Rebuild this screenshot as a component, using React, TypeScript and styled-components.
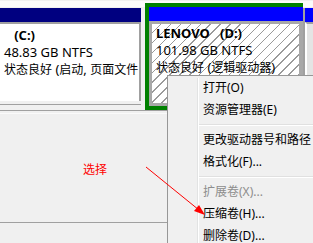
import React from 'react';
import styled, {createGlobalStyle} from "styled-components";

const GlobalStyle = createGlobalStyle`
html, body {
margin: 0;
padding: 0;
background: #f0f0f0;
}
`

const Screen = styled.div`
position: relative;
width: 313px;
height: 243px;
overflow: hidden;
background: #f0f0f0;
font-family: "Noto Sans", "Noto Sans CJK SC", sans-serif;
font-size: 12px;
color: #000;
`
const DiskRow = styled.div`
display: flex;
align-items: flex-start;
height: 110px;
font-size: 13px;
background: linear-gradient(#f0f0f0 0 1px, #fbfbfb 1px 7px, #f0f0f0 7px);
`
const Partition = styled.div<{width: number}>`
display: flex;
flex-direction: column;
flex: none;
width: ${({width}) => width}px;
margin-top: 8px;
`
const Header = styled.div<{primary?: boolean}>`
height: 14px;
background: ${({primary}) => primary ? "#000080" : "#0000ff"};
`
const Body = styled.div`
height: 79px;
background: #fff;
border-top: 2px solid #a0a0a0;
border-right: 2px solid #a0a0a0;
padding: 3px 0 0 4px;
box-sizing: border-box;
line-height: 17px;
white-space: pre;
overflow: hidden;
`
const PartitionFoot = styled.div`
margin-top: 3px;
border-top: 1px solid #a0a0a0;
`
const Selected = styled.div`
display: flex;
flex-direction: column;
flex: none;
width: 158px;
height: 107px;
margin: 3px 0 0 4px;
border: 4px solid #008000;
border-right: none;
box-sizing: border-box;
`
const Frame = styled.div`
flex: 1;
border: 3px solid #a8a8a8;
border-right-width: 4px;
background: #fff repeating-linear-gradient(135deg, #fff 0 6px, #9a9a9a 6px 7px);
padding: 1px 0 0 4px;
line-height: 17px;
white-space: pre;
overflow: hidden;
`
const Rest = styled.div`
flex: 1;
display: flex;
flex-direction: column;
margin-top: 8px;
border-left: 2px solid #a0a0a0;
height: 100px;
`
const RestBody = styled.div`
flex: 1;
border-left: 2px solid #fff;
border-top: 2px solid #a0a0a0;
background: #e4e4e4;
`
const Line = styled.div`
height: 17px;
`
const Bold = styled.b`
font-weight: 700;
`
const Cjk = styled.span`
font-size: 12px;
`
const Rule = styled.div<{light?: boolean}>`
height: 1px;
background: ${({light}) => light ? "#fafafa" : "#a0a0a0"};
`
const Blank = styled.div<{height: number}>`
height: ${({height}) => height}px;
`
const Note = styled.div`
position: absolute;
left: 83px;
top: 162px;
color: #ff0000;
font-size: 12px;
line-height: 16px;
`
const Arrow = styled.svg`
position: absolute;
left: 0;
top: 0;
z-index: 2;
pointer-events: none;
`
const Menu = styled.div`
position: absolute;
left: 167px;
top: 75px;
width: 170px;
padding: 1px 0 2px;
background: #f0f0f0;
border: 1px solid #979797;
box-shadow: 2px 2px 2px rgba(0, 0, 0, 0.2);
z-index: 1;
&::before {
content: "";
position: absolute;
left: 29px;
top: 2px;
bottom: 0;
width: 1px;
background: #e2e3e3;
border-right: 1px solid #fff;
}
`
const Item = styled.div<{disabled?: boolean}>`
position: relative;
height: 22px;
line-height: 22px;
padding-left: 35px;
white-space: nowrap;
color: ${({disabled}) => disabled ? "#8d8d8d" : "#000"};
`
const Separator = styled.div`
position: relative;
height: 8px;
margin-left: 31px;
&::after {
content: "";
position: absolute;
left: 0;
right: 0;
top: 3px;
height: 1px;
background: #e0e0e0;
border-bottom: 1px solid #fff;
}
`

const menuItems: Array<string | null> = [
    "打开(O)",
    "资源管理器(E)",
    null,
    "更改驱动器号和路径",
    "格式化(F)...",
    null,
    "扩展卷(X)...",
    "压缩卷(H)...",
    "删除卷(D)...",
]

const App = () => {
    return (
        <Screen>
            <GlobalStyle/>
            <DiskRow>
                <Partition width={141}>
                    <Header primary/>
                    <Body>
                        <Line><Bold>{"   (C:)"}</Bold></Line>
                        <Line>48.83 GB NTFS</Line>
                        <Line><Cjk>状态良好</Cjk> (<Cjk>启动</Cjk>, <Cjk>页面文件</Cjk></Line>
                    </Body>
                    <PartitionFoot/>
                </Partition>
                <Selected>
                    <Header/>
                    <Frame>
                        <Line><Bold>{"LENOVO   (D:)"}</Bold></Line>
                        <Line>101.98 GB NTFS</Line>
                        <Line><Cjk>状态良好</Cjk> (<Cjk>逻辑驱动器</Cjk>)</Line>
                    </Frame>
                </Selected>
                <Rest>
                    <Header/>
                    <RestBody/>
                </Rest>
            </DiskRow>
            <Rule/>
            <Blank height={2}/>
            <Rule light/>
            <Blank height={108}/>
            <Rule/>
            <Note>选择</Note>
            <Menu>
                {menuItems.map((item, i) => item === null
                    ? <Separator key={i}/>
                    : <Item key={i} disabled={item.startsWith("扩展")}>{item}</Item>)}
            </Menu>
            <Arrow width={313} height={243} viewBox="0 0 313 243">
                <line x1={146} y1={167} x2={199} y2={210} stroke="#ff0000" strokeWidth={1}/>
                <polygon points="205,215 194,211 199,205" fill="#ff0000"/>
            </Arrow>
        </Screen>
    );
};

export default App;
